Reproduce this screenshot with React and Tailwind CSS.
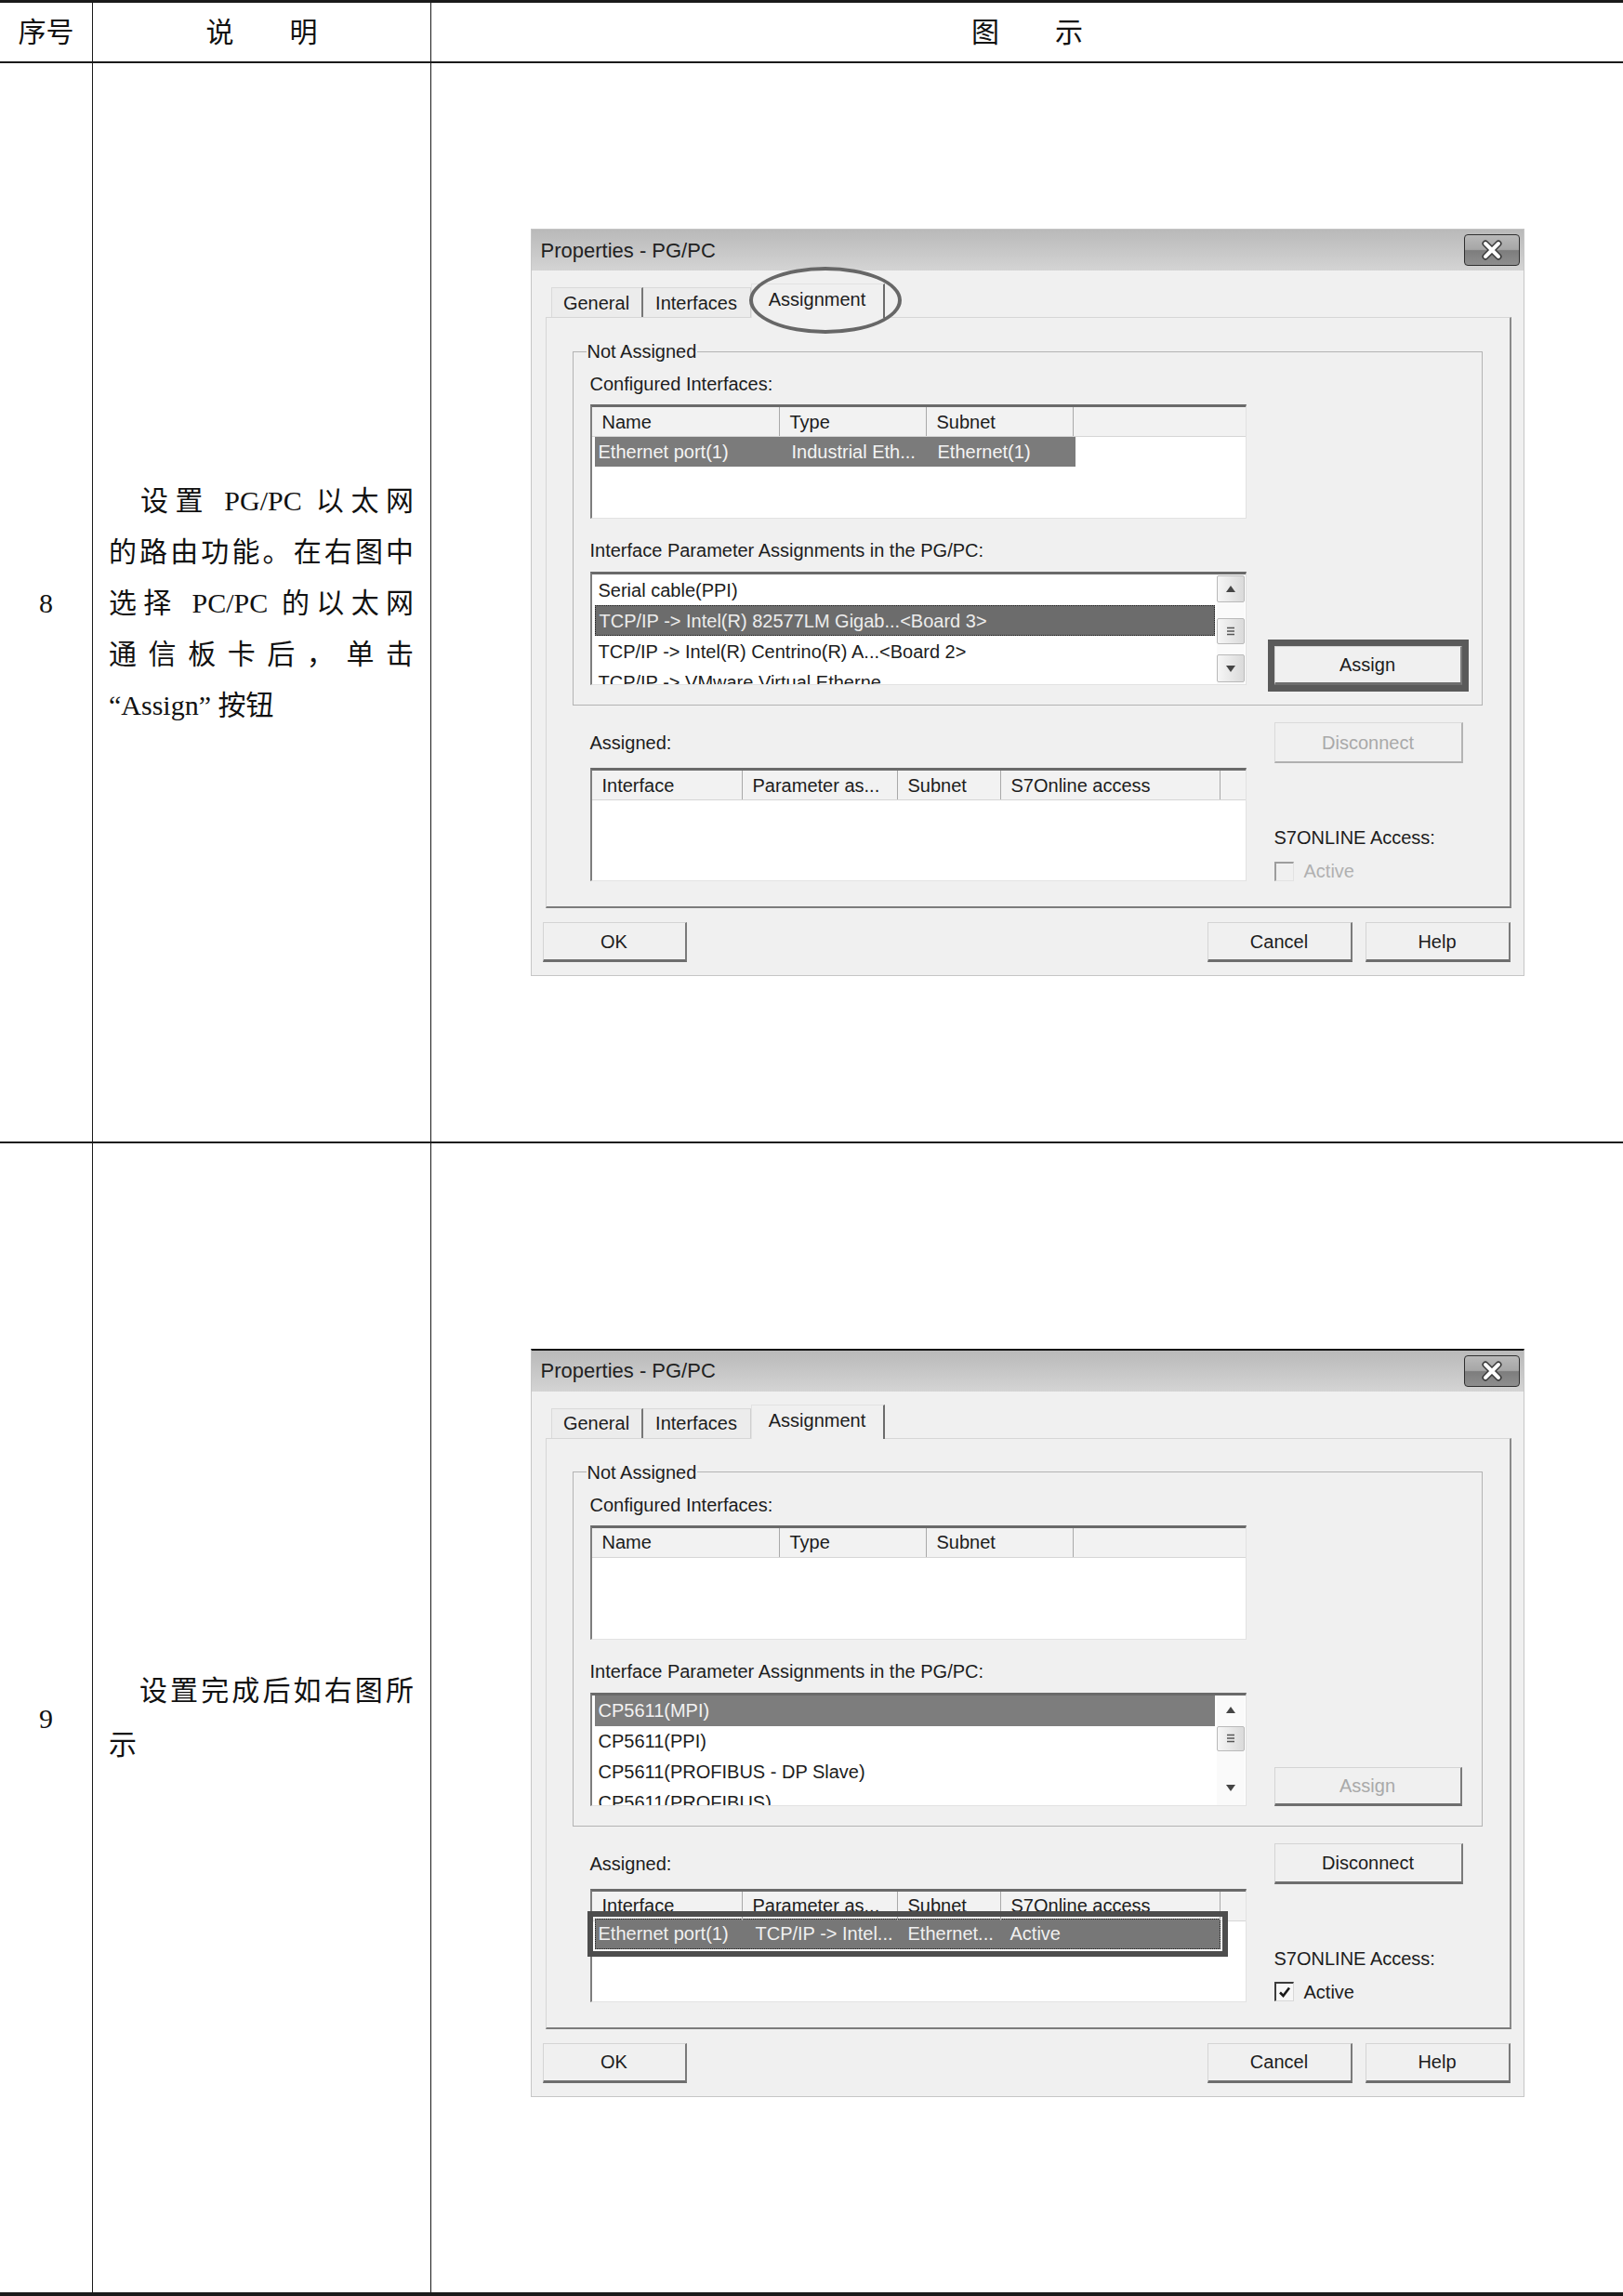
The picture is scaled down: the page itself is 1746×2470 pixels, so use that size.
import React from 'react';

// shared raised button look (classic windows)
const raised =
  'flex items-center justify-center bg-[#f0f0f0] border border-[#d4d4d4] border-r-2 border-b-[3px] border-r-[#7a7a7a] border-b-[#6e6e6e]';
const raisedSoft =
  'flex items-center justify-center bg-[#f0f0f0] border border-[#dadada] border-r-2 border-b-2 border-r-[#b4b4b4] border-b-[#b0b0b0]';

function WinButton({ className = '', disabled, soft, children }) {
  return (
    <div className={`${soft ? raisedSoft : raised} ${disabled ? 'text-[#a9a9a9]' : 'text-[#1c1c1c]'} ${className}`}>
      {children}
    </div>
  );
}

function CloseButton() {
  return (
    <div className="w-[60px] h-[34px] rounded-[4px] border border-[#2f2f2f] bg-[linear-gradient(#b9b9b9_0%,#a6a6a6_48%,#7d7d7d_52%,#8e8e8e_100%)] flex items-center justify-center">
      <svg width="26" height="22" viewBox="0 0 26 22">
        <path d="M6 4 L20 18 M20 4 L6 18" stroke="#3a3a3a" strokeWidth="7" strokeLinecap="round" />
        <path d="M6 4 L20 18 M20 4 L6 18" stroke="#ffffff" strokeWidth="4" strokeLinecap="round" />
      </svg>
    </div>
  );
}

function Tabs({ circled }) {
  return (
    <div className="h-[36px] flex items-end pl-[9px] relative z-10">
      <div className="w-[99px] h-[32px] flex items-center justify-center bg-[#ececec] border-t border-l border-[#dadada] border-r-2 border-r-[#777777]">
        General
      </div>
      <div className="w-[116px] h-[32px] flex items-center justify-center bg-[#ececec] border-t border-[#dadada] border-r border-r-[#cfcfcf]">
        Interfaces
      </div>
      <div className="relative w-[144px] h-[37px] -mb-px pb-[4px] flex items-center justify-center bg-[#f0f0f0] border-t border-l border-[#e2e2e2] border-r-2 border-r-[#6c6c6c]">
        Assignment
        {circled && (
          <span className="absolute left-[-3px] top-[-19px] w-[164px] h-[72px] rounded-[50%] border-[4px] border-[#676767] pointer-events-none" />
        )}
      </div>
    </div>
  );
}

const listFrame =
  'bg-white border-t-[3px] border-t-[#6a6a6a] border-l-2 border-l-[#7e7e7e] border-r border-r-[#e2e2e2] border-b border-b-[#e2e2e2]';

function HeaderCell({ w, children }) {
  return (
    <div className={`${w} h-full flex items-center pl-[11px] border-r border-[#a9a9a9] whitespace-nowrap`}>
      {children}
    </div>
  );
}

function Arrow({ down }) {
  return (
    <svg width="10" height="7" viewBox="0 0 10 7">
      <path d={down ? 'M0 0 L10 0 L5 7 Z' : 'M5 0 L10 7 L0 7 Z'} fill="#454545" />
    </svg>
  );
}

function ScrollBar({ framed, thumbGap, downGap, thumbH }) {
  const frame = 'border border-[#b9b9b9] rounded-[2px] bg-linear-to-r from-[#f6f6f6] to-[#dadada]';
  return (
    <div className="w-[30px] mr-[1px] pt-[1px] flex flex-col bg-[#fafafa]">
      <div className={`h-[29px] flex items-center justify-center ${framed ? frame : ''}`}>
        <Arrow />
      </div>
      <div className={`h-[28px] flex items-center justify-center ${frame}`} style={{ marginTop: thumbGap, height: thumbH }}>
        <svg width="12" height="12" viewBox="0 0 12 12">
          <path d="M2 2.5 H10 M2 6 H10 M2 9.5 H10" stroke="#555555" strokeWidth="1.3" />
        </svg>
      </div>
      <div className={`h-[30px] flex items-center justify-center ${framed ? frame : ''}`} style={{ marginTop: downGap }}>
        <Arrow down />
      </div>
    </div>
  );
}

function CheckBox({ checked }) {
  return (
    <div
      className={`w-[21px] h-[21px] border-l-2 border-t-2 border-r border-b flex items-center justify-center ${
        checked
          ? 'border-l-[#3c3c3c] border-t-[#3c3c3c] border-r-[#d8d8d8] border-b-[#d8d8d8] bg-[#f7f7f7]'
          : 'border-l-[#9d9d9d] border-t-[#9d9d9d] border-r-[#e2e2e2] border-b-[#e2e2e2] bg-[#f0f0f0]'
      }`}
    >
      {checked && (
        <svg width="14" height="14" viewBox="0 0 14 14">
          <path d="M2 7.5 L5.5 11 L12 2.5" fill="none" stroke="#1a1a1a" strokeWidth="2.6" />
        </svg>
      )}
    </div>
  );
}

function Dialog({ done }) {
  const params = done
    ? ['CP5611(MPI)', 'CP5611(PPI)', 'CP5611(PROFIBUS - DP Slave)', 'CP5611(PROFIBUS)']
    : [
        'Serial cable(PPI)',
        'TCP/IP -> Intel(R) 82577LM Gigab...<Board 3>',
        'TCP/IP -> Intel(R) Centrino(R) A...<Board 2>',
        'TCP/IP -> VMware Virtual Etherne',
      ];
  const selected = done ? 0 : 1;

  return (
    <div
      className={`w-[1069px] bg-[#f0f0f0] border border-[#c6c6c6] font-['Liberation_Sans',Arial,sans-serif] text-[20px] text-[#1c1c1c] ${
        done ? 'border-t-2 border-t-[#111111]' : ''
      }`}
    >
      {/* Title bar */}
      <div className="h-[44px] flex items-center justify-between pl-[10px] pr-[4px] bg-linear-to-b from-[#b9b9b9] to-[#d4d4d4]">
        <span className="text-[22px] text-[#222222]">Properties - PG/PC</span>
        <CloseButton />
      </div>

      <div className="pl-[12px] pr-[13px] pt-[14px] pb-[14px]">
        <Tabs circled={!done} />

        {/* Tab panel */}
        <div className="ml-[3px] h-[636px] border border-[#d6d6d6] border-r-2 border-b-2 border-r-[#8a8a8a] border-b-[#7c7c7c] pl-[28px] pr-[29px] pt-[24px]">
          <fieldset className="border border-[#b3b3b3]">
            <legend className="ml-[14px] px-[1px] leading-[24px]">Not Assigned</legend>
            <div className="flex items-end gap-[30px] pl-[18px] pr-[21px] pb-[21px]">
              <div className="w-[706px]">
                <div className="mt-[11px] leading-[24px]">Configured Interfaces:</div>
                <div className={`mt-[10px] h-[123px] overflow-hidden ${listFrame}`}>
                  <div className="h-[32px] flex bg-[#f2f2f2] border-b border-[#d6d6d6]">
                    <HeaderCell w="w-[202px]">Name</HeaderCell>
                    <HeaderCell w="w-[158px]">Type</HeaderCell>
                    <HeaderCell w="w-[158px]">Subnet</HeaderCell>
                    <div className="flex-1" />
                  </div>
                  {!done && (
                    <div className="ml-[3px] w-[517px] h-[32px] flex items-center bg-[#7b7b7b] text-[#f4f4f4] whitespace-nowrap">
                      <div className="w-[199px] pl-[4px]">Ethernet port(1)</div>
                      <div className="w-[158px] pl-[13px]">Industrial Eth...</div>
                      <div className="w-[158px] pl-[12px]">Ethernet(1)</div>
                    </div>
                  )}
                </div>

                <div className="mt-[22px] leading-[24px]">Interface Parameter Assignments in the PG/PC:</div>
                <div className={`mt-[11px] h-[122px] flex overflow-hidden ${listFrame}`}>
                  <div className="flex-1 pl-[3px] pr-[2px]">
                    {params.map((p, i) => (
                      <div
                        key={p}
                        className={`h-[33px] flex items-center pl-[4px] whitespace-nowrap ${
                          i === selected
                            ? done
                              ? 'bg-[#7d7d7d] text-[#f2f2f2]'
                              : 'bg-[#6c6c6c] text-[#ececec] border border-dotted border-[#1e1e1e]'
                            : ''
                        }`}
                      >
                        {p}
                      </div>
                    ))}
                  </div>
                  {done ? (
                    <ScrollBar framed={false} thumbGap="3px" thumbH="27px" downGap="25px" />
                  ) : (
                    <ScrollBar framed thumbGap="17px" thumbH="28px" downGap="11px" />
                  )}
                </div>
              </div>

              <WinButton
                disabled={done}
                className={`w-[202px] h-[42px] ${!done ? 'outline-solid outline-[7px] outline-[#5a5a5a]' : ''}`}
              >
                Assign
              </WinButton>
            </div>
          </fieldset>

          {/* Assigned section */}
          <div className="mt-[18px] pl-[19px] flex gap-[30px]">
            <div className="w-[706px]">
              <div className="h-[44px] flex items-center">Assigned:</div>
              <div className={`mt-[5px] h-[122px] ${listFrame}`}>
                <div className="h-[32px] flex bg-[#f2f2f2] border-b border-[#d6d6d6]">
                  <HeaderCell w="w-[162px]">Interface</HeaderCell>
                  <HeaderCell w="w-[167px]">Parameter as...</HeaderCell>
                  <HeaderCell w="w-[111px]">Subnet</HeaderCell>
                  <HeaderCell w="w-[236px]">S7Online access</HeaderCell>
                  <div className="flex-1" />
                </div>
                {done && (
                  <div className="-mt-[3px] ml-[3px] w-[673px] h-[33px] flex items-center bg-[#777777] text-[#f0f0f0] whitespace-nowrap border border-dotted border-[#1e1e1e] outline-solid outline-[6px] outline-[#4d4d4d] outline-offset-[2px]">
                    <div className="w-[159px] pl-[3px]">Ethernet port(1)</div>
                    <div className="w-[167px] pl-[13px]">TCP/IP -&gt; Intel...</div>
                    <div className="w-[111px] pl-[10px]">Ethernet...</div>
                    <div className="flex-1 pl-[9px]">Active</div>
                  </div>
                )}
              </div>
            </div>

            <div>
              <WinButton disabled={!done} soft={!done} className="w-[203px] h-[44px]">
                Disconnect
              </WinButton>
              <div className="mt-[68px] leading-[24px]">S7ONLINE Access:</div>
              <div className="mt-[12px] h-[24px] flex items-center gap-[11px]">
                <CheckBox checked={done} />
                <span className={done ? 'text-[#1c1c1c]' : 'text-[#b0b0b0]'}>Active</span>
              </div>
            </div>
          </div>
        </div>

        {/* Bottom buttons */}
        <div className="mt-[15px] flex justify-between pr-[1px]">
          <WinButton className="w-[155px] h-[43px]">OK</WinButton>
          <div className="flex gap-[14px]">
            <WinButton className="w-[156px] h-[43px]">Cancel</WinButton>
            <WinButton className="w-[156px] h-[43px]">Help</WinButton>
          </div>
        </div>
      </div>
    </div>
  );
}

export default function App() {
  return (
    <div className="w-[1746px] h-[2470px] bg-white text-[#111111] font-['Liberation_Serif','Noto_Sans_CJK_SC',serif]">
      <div className="border-t-[3px] border-b-[4px] border-[#1a1a1a]">
        {/* Header row */}
        <div className="grid grid-cols-[100px_364px_1fr] h-[65px] border-b-2 border-[#1a1a1a] text-[30px]">
          <div className="flex items-center justify-center border-r border-[#1a1a1a]">序号</div>
          <div className="flex items-center justify-center border-r border-[#1a1a1a]">说　　明</div>
          <div className="flex items-center justify-center">图　　示</div>
        </div>

        {/* Row 8 */}
        <div className="grid grid-cols-[100px_364px_1fr] h-[1162px] border-b-2 border-[#1a1a1a]">
          <div className="flex items-center justify-center border-r border-[#1a1a1a] text-[30px]">8</div>
          <div className="flex items-center pl-[17px] border-r border-[#1a1a1a]">
            <div className="w-[328px] text-[30px] leading-[55px] text-justify">
              <div className="pl-[34px] [text-align-last:justify]">设置 PG/PC 以太网</div>
              <div className="[text-align-last:justify]">的路由功能。在右图中</div>
              <div className="[text-align-last:justify]">选择 PC/PC 的以太网</div>
              <div className="[text-align-last:justify]">通信板卡后，单击</div>
              <div>“Assign” 按钮</div>
            </div>
          </div>
          <div className="flex items-center justify-center">
            <Dialog done={false} />
          </div>
        </div>

        {/* Row 9 */}
        <div className="grid grid-cols-[100px_364px_1fr] h-[1236px]">
          <div className="flex items-center justify-center border-r border-[#1a1a1a] text-[30px]">9</div>
          <div className="flex items-center pl-[17px] border-r border-[#1a1a1a]">
            <div className="w-[328px] text-[30px] leading-[58px]">
              <div className="pl-[33px] text-justify [text-align-last:justify]">设置完成后如右图所</div>
              <div>示</div>
            </div>
          </div>
          <div className="flex items-center justify-center pt-[10px]">
            <Dialog done />
          </div>
        </div>
      </div>
    </div>
  );
}
